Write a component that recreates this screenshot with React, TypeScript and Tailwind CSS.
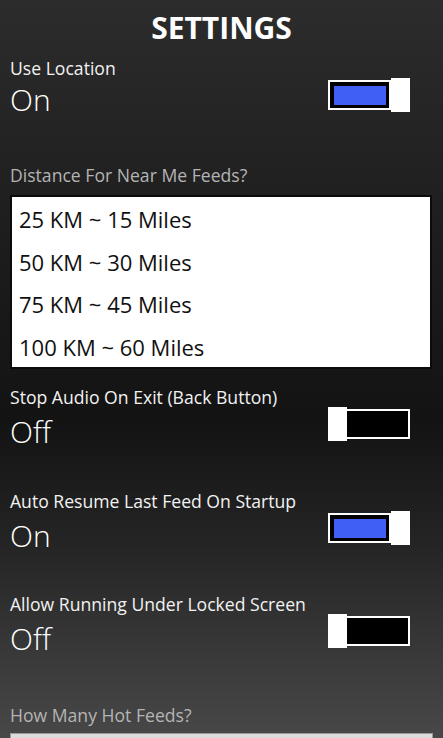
const font = { fontFamily: '"Open Sans", "Noto Sans", sans-serif' };

type ToggleProps = { on: boolean };

const Toggle = ({ on }: ToggleProps) => {
  if (on) {
    return (
      <div className="flex items-center h-[34px]">
        <div className="w-[63px] h-[30px] border-2 border-white bg-black p-[4px] pr-[3px] pb-[3px]">
          <div className="w-full h-full bg-[#3f5ff5]" />
        </div>
        <div className="w-[19px] h-[34px] bg-white" />
      </div>
    );
  }
  return (
    <div className="flex items-center h-[34px]">
      <div className="w-[19px] h-[34px] bg-white" />
      <div className="w-[63px] h-[30px] border-2 border-l-0 border-white bg-black" />
    </div>
  );
};

type RowProps = {
  label: string;
  on: boolean;
  tight?: boolean;
  className?: string;
};

const ToggleRow = ({ label, on, tight, className }: RowProps) => (
  <div className={"flex justify-between " + (className ?? "")}>
    <div className="flex flex-col">
      <span className="text-[17.6px] leading-[20px] text-[#f2f2f2]">{label}</span>
      <span
        className={
          (tight ? "mt-[4px] " : "mt-[7px] ") +
          "text-[30px] leading-[36px] font-light text-white"
        }
      >
        {on ? "On" : "Off"}
      </span>
    </div>
    <div className="mt-[20px] mr-[23px]">
      <Toggle on={on} />
    </div>
  </div>
);

const distances = [
  "25 KM ~ 15 Miles",
  "50 KM ~ 30 Miles",
  "75 KM ~ 45 Miles",
  "100 KM ~ 60 Miles",
];

export default function App() {
  return (
    <div
      style={font}
      className="h-[738px] overflow-hidden px-[10px] bg-[linear-gradient(180deg,#2c2c2c_0%,#1c1c1c_35%,#131313_57%,#262626_75%,#484848_100%)]"
    >
      <h1 className="pt-[10px] text-center text-[30px] leading-[36px] font-bold text-white">
        SETTINGS
      </h1>

      <ToggleRow label="Use Location" on tight className="mt-[12px]" />

      <div className="mt-[47px] text-[17.6px] leading-[20px] text-[#b4b4b4]">
        Distance For Near Me Feeds?
      </div>
      <div className="mt-[10px] mr-[1px] border-2 border-[#0b0b0b] bg-white">
        {distances.map((d) => (
          <div
            key={d}
            className="h-[42.5px] pt-[2px] pl-[7px] text-[22px] leading-[40.5px] text-[#111]"
          >
            {d}
          </div>
        ))}
      </div>

      <ToggleRow label="Stop Audio On Exit (Back Button)" on={false} className="mt-[18px]" />
      <ToggleRow label="Auto Resume Last Feed On Startup" on className="mt-[41px]" />
      <ToggleRow label="Allow Running Under Locked Screen" on={false} className="mt-[40px]" />

      <div className="mt-[48px] text-[17.6px] leading-[20px] text-[#b4b4b4]">
        How Many Hot Feeds?
      </div>
      <div className="mt-[8px] h-[60px] border border-[#9a9a9a] bg-[#dcdcdc]" />
    </div>
  );
}
